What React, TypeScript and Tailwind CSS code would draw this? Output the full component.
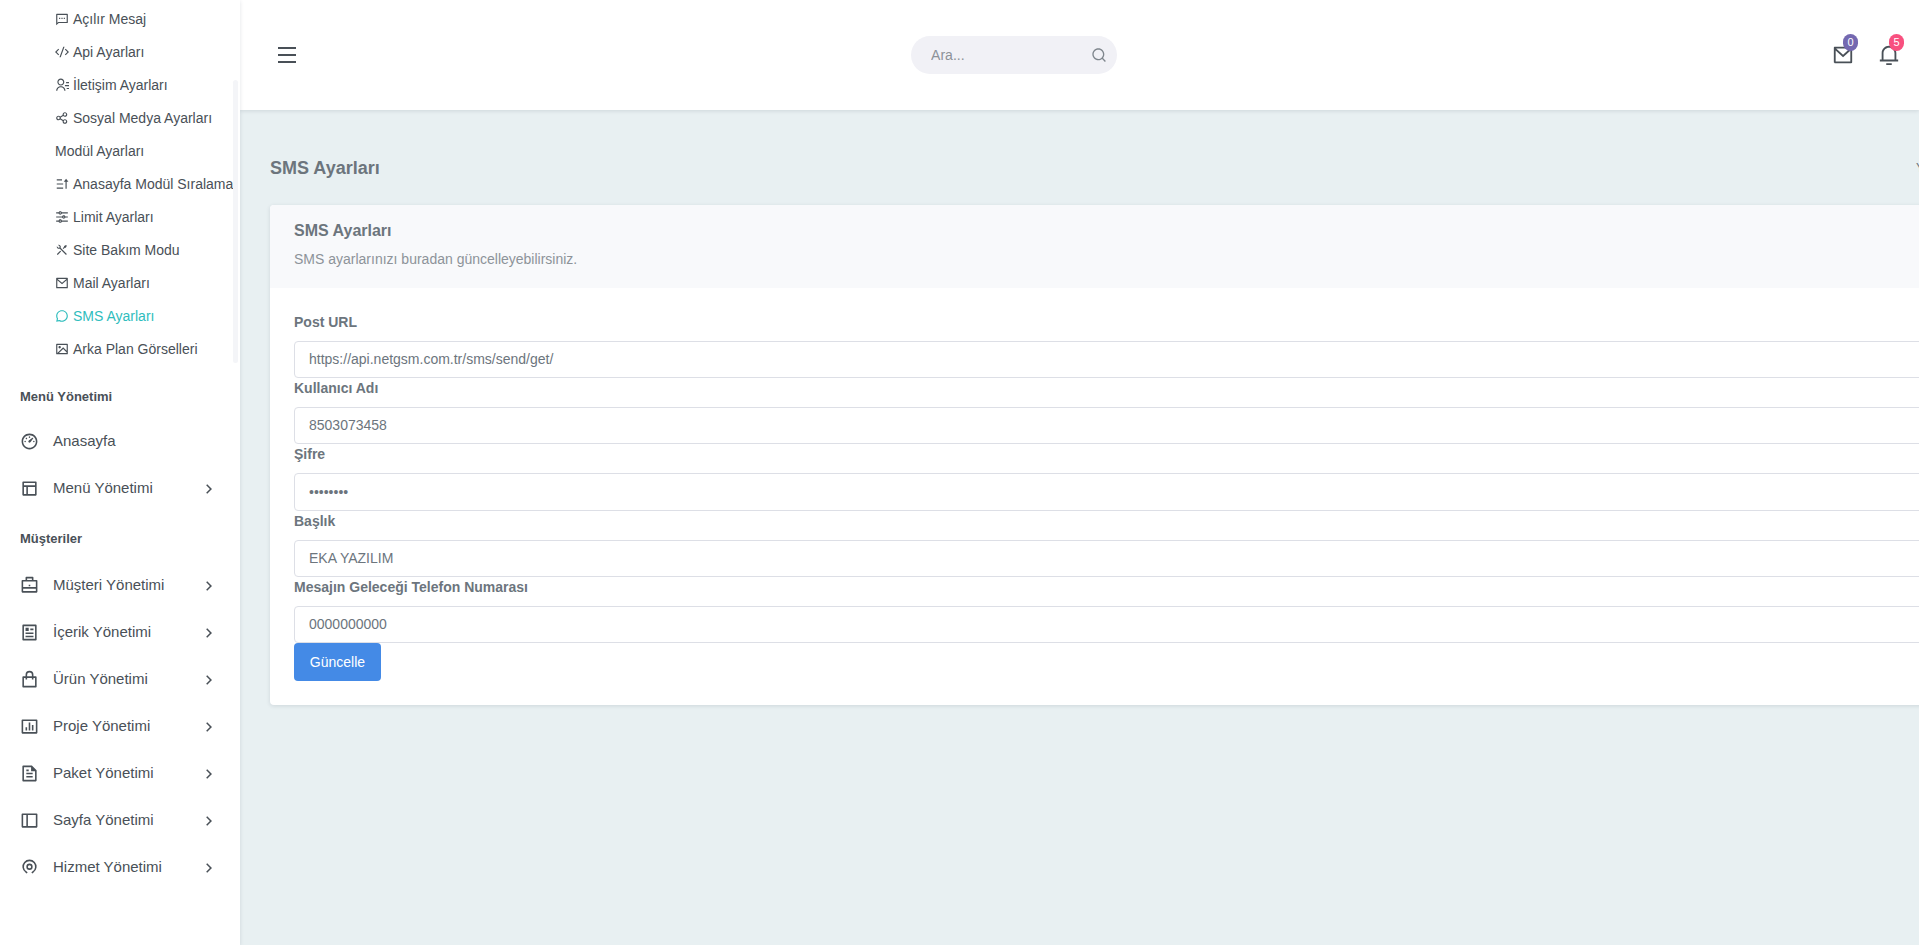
import React from "react";
import {
  RiMessage2Line,
  RiCodeSSlashLine,
  RiContactsLine,
  RiShareLine,
  RiSortAsc,
  RiEqualizerLine,
  RiToolsLine,
  RiMailLine,
  RiChat3Line,
  RiImageLine,
  RiDashboard3Line,
  RiBriefcaseLine,
  RiArticleLine,
  RiBarChartBoxLine,
  RiFileTextLine,
  RiSideBarLine,
  RiArrowRightSLine,
  RiMenuLine,
  RiSearchLine,
  RiNotification3Line,
} from "react-icons/ri";

type IconProps = { size?: number; className?: string };
type Icon = React.ComponentType<IconProps>;
type Item = { text: string; icon?: Icon; active?: boolean };

function LayoutIcon({ size = 24, className }: IconProps) {
  return (
    <svg viewBox="0 0 24 24" width={size} height={size} fill="currentColor" className={className} aria-hidden="true">
      <path d="M8 10H5v9h3v-9zm2 0v9h9v-9h-9zm9-2V5H5v3h14zM4 3h16a1 1 0 0 1 1 1v16a1 1 0 0 1-1 1H4a1 1 0 0 1-1-1V4a1 1 0 0 1 1-1z" />
    </svg>
  );
}

function BagIcon({ size = 24, className }: IconProps) {
  return (
    <svg viewBox="0 0 24 24" width={size} height={size} fill="currentColor" className={className} aria-hidden="true">
      <path d="M7 8V6a5 5 0 1 1 10 0v2h3a1 1 0 0 1 1 1v12a1 1 0 0 1-1 1H4a1 1 0 0 1-1-1V9a1 1 0 0 1 1-1h3zm0 2H5v10h14V10h-2v2h-2v-2H9v2H7v-2zm2-2h6V6a3 3 0 0 0-6 0v2z" />
    </svg>
  );
}

function ServiceIcon({ size = 24, className }: IconProps) {
  return (
    <svg
      viewBox="0 0 24 24"
      width={size}
      height={size}
      fill="none"
      stroke="currentColor"
      strokeWidth={2}
      className={className}
      aria-hidden="true"
    >
      <path d="M9 19L7.5 17.6a8 8 0 1 1 9 0L15 19" />
      <circle cx="12" cy="11" r="3" />
    </svg>
  );
}

const settings: Item[] = [
  { text: "Açılır Mesaj", icon: RiMessage2Line },
  { text: "Api Ayarları", icon: RiCodeSSlashLine },
  { text: "İletişim Ayarları", icon: RiContactsLine },
  { text: "Sosyal Medya Ayarları", icon: RiShareLine },
  { text: "Modül Ayarları" },
  { text: "Anasayfa Modül Sıralama", icon: RiSortAsc },
  { text: "Limit Ayarları", icon: RiEqualizerLine },
  { text: "Site Bakım Modu", icon: RiToolsLine },
  { text: "Mail Ayarları", icon: RiMailLine },
  { text: "SMS Ayarları", icon: RiChat3Line, active: true },
  { text: "Arka Plan Görselleri", icon: RiImageLine },
];

const customers: { text: string; icon: Icon }[] = [
  { text: "Müşteri Yönetimi", icon: RiBriefcaseLine },
  { text: "İçerik Yönetimi", icon: RiArticleLine },
  { text: "Ürün Yönetimi", icon: BagIcon },
  { text: "Proje Yönetimi", icon: RiBarChartBoxLine },
  { text: "Paket Yönetimi", icon: RiFileTextLine },
  { text: "Sayfa Yönetimi", icon: RiSideBarLine },
  { text: "Hizmet Yönetimi", icon: ServiceIcon },
];

const fields = [
  { id: "post-url", label: "Post URL", type: "text", value: "https://api.netgsm.com.tr/sms/send/get/" },
  { id: "user", label: "Kullanıcı Adı", type: "text", value: "8503073458" },
  { id: "password", label: "Şifre", type: "password", value: "12345678" },
  { id: "title", label: "Başlık", type: "text", value: "EKA YAZILIM" },
  { id: "phone", label: "Mesajın Geleceği Telefon Numarası", type: "text", value: "0000000000" },
];

function MenuRow({ text, icon: Icon, arrow = true }: { text: string; icon: Icon; arrow?: boolean }) {
  return (
    <li>
      <a href="#" className="flex h-[47px] items-center pr-[22px] pl-5 text-[15px]">
        <Icon size={19} className="shrink-0" />
        <span className="ml-[14px] flex-1 whitespace-nowrap">{text}</span>
        {arrow && <RiArrowRightSLine size={18} className="shrink-0" />}
      </a>
    </li>
  );
}

function Sidebar() {
  return (
    <nav className="relative z-20 w-60 shrink-0 overflow-hidden bg-white text-[#495057] shadow-[0_1px_4px_rgba(15,34,58,0.12)]">
      <div className="relative pt-[2px] pb-px">
        <ul>
          {settings.map(({ text, icon: Icon, active }) => (
            <li key={text}>
              <a
                href="#"
                className={
                  active
                    ? "flex h-[33px] items-center gap-1 pl-[55px] text-sm whitespace-nowrap text-[#2fbdbd]"
                    : "flex h-[33px] items-center gap-1 pl-[55px] text-sm whitespace-nowrap"
                }
              >
                {Icon && <Icon size={14} className="shrink-0" />}
                {text}
              </a>
            </li>
          ))}
        </ul>
        <div className="absolute top-20 right-[2px] bottom-[3px] w-[5px] rounded-sm bg-[#f4f5f8]" />
      </div>
      <h2 className="mt-[21px] pl-5 text-[13px] leading-5 font-bold">Menü Yönetimi</h2>
      <ul className="mt-[11px]">
        <MenuRow text="Anasayfa" icon={RiDashboard3Line} arrow={false} />
        <MenuRow text="Menü Yönetimi" icon={LayoutIcon} />
      </ul>
      <h2 className="mt-[17px] pl-5 text-[13px] leading-5 font-bold">Müşteriler</h2>
      <ul className="mt-[13px]">
        {customers.map((item) => (
          <MenuRow key={item.text} text={item.text} icon={item.icon} />
        ))}
      </ul>
    </nav>
  );
}

function Header() {
  return (
    <header className="relative z-10 flex h-[110px] items-center bg-white text-[#495057] shadow-[0_1px_4px_rgba(15,34,58,0.12)]">
      <div className="flex flex-[13] pl-[35px]">
        <button type="button" aria-label="Menü">
          <RiMenuLine size={24} />
        </button>
      </div>
      <form className="relative">
        <input
          type="text"
          aria-label="Ara"
          placeholder="Ara..."
          className="h-[38px] w-[206px] rounded-full bg-[#f1f1f6] pr-10 pl-5 text-sm outline-none placeholder:text-[#8c9299]"
        />
        <RiSearchLine size={16} className="absolute top-[11px] right-[10px] text-[#7f868d]" />
      </form>
      <div className="flex flex-[16] justify-end gap-6 pr-[19px]">
        <button type="button" aria-label="Mesajlar" className="relative">
          <RiMailLine size={22} />
          <span className="absolute -top-[10px] -right-1 flex h-[17px] w-[15px] items-center justify-center rounded-full bg-[#7468b0] text-[11px] text-white">
            0
          </span>
        </button>
        <button type="button" aria-label="Bildirimler" className="relative">
          <RiNotification3Line size={22} />
          <span className="absolute -top-[10px] -right-1 flex h-[17px] w-[15px] items-center justify-center rounded-full bg-[#f8507f] text-[11px] text-white">
            5
          </span>
        </button>
      </div>
    </header>
  );
}

export default function App() {
  return (
    <div className="flex min-h-screen overflow-hidden bg-[#e8f0f2] font-['Liberation_Sans',Arial,sans-serif] text-[#6c757d]">
      <Sidebar />
      <div className="min-w-0 flex-1">
        <Header />
        <main className="overflow-hidden pb-6 pl-[30px]">
          <div className="flex h-[95px] items-center justify-between">
            <h1 className="pt-5 text-lg leading-6 font-bold">SMS Ayarları</h1>
            <span className="w-[3px] pt-5 text-xs whitespace-nowrap">Yönetim</span>
          </div>
          <section className="-mr-6 rounded bg-white shadow-[0_1px_4px_rgba(15,34,58,0.12)]">
            <div className="rounded-t bg-[#f8f9fb] px-6 pt-4 pb-[18px]">
              <h2 className="mb-2 text-base leading-5 font-bold">SMS Ayarları</h2>
              <p className="text-sm leading-[21px] text-[#8d9399]">
                SMS ayarlarınızı buradan güncelleyebilirsiniz.
              </p>
            </div>
            <form className="py-6 pl-6">
              {fields.map((f) => (
                <div key={f.id}>
                  <label htmlFor={f.id} className="mb-2 block text-sm leading-[21px] font-bold">
                    {f.label}
                  </label>
                  <input
                    id={f.id}
                    type={f.type}
                    defaultValue={f.value}
                    className={
                      f.type === "password"
                        ? "block h-[38px] w-full rounded border border-[#dddfe6] bg-white px-[14px] text-sm outline-none"
                        : "block h-[37px] w-full rounded border border-[#dddfe6] bg-white px-[14px] pb-[2px] text-sm outline-none"
                    }
                  />
                </div>
              ))}
              <button type="button" className="block h-[38px] min-w-[87px] rounded bg-[#448ae6] px-[15px] text-sm text-white">
                Güncelle
              </button>
            </form>
          </section>
        </main>
      </div>
    </div>
  );
}
